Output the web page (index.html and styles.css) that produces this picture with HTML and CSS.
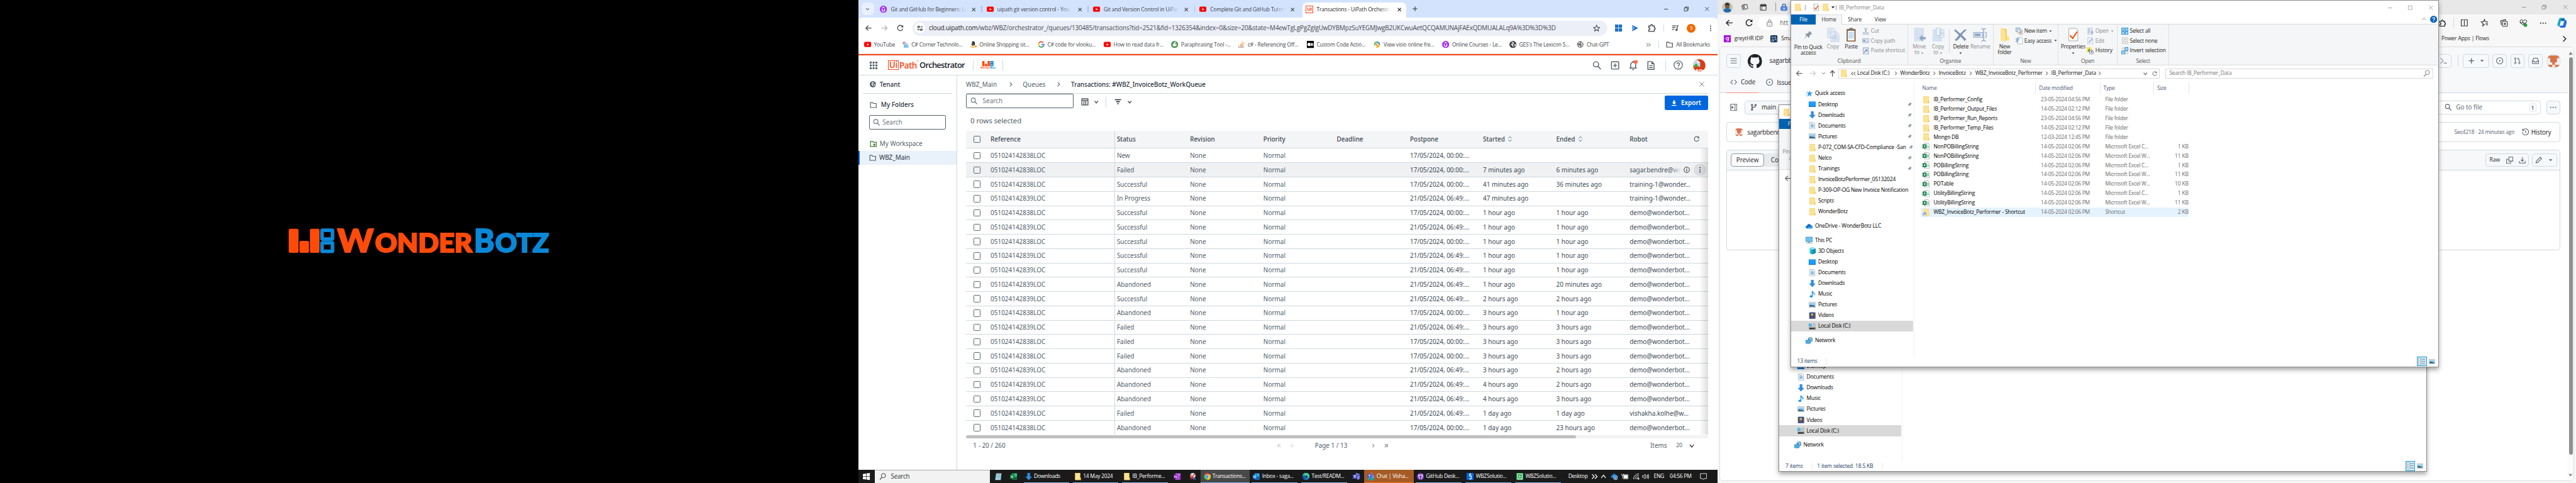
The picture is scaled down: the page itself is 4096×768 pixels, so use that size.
FILE: index.html
```html
<!DOCTYPE html>
<html lang="en">
<head>
<meta charset="utf-8">
<title>Desktop</title>
<link rel="stylesheet" href="styles.css">
</head>
<body>
<svg class="sprite" aria-hidden="true">
<symbol id="x" viewBox="0 0 16 16"><path d="M3 3l10 10M13 3L3 13" fill="none" stroke="currentColor" stroke-width="2"/></symbol>
<symbol id="xthin" viewBox="0 0 16 16"><path d="M2 2l12 12M14 2L2 14" fill="none" stroke="currentColor" stroke-width="1.3"/></symbol>
<symbol id="min" viewBox="0 0 16 16"><path d="M2 8.5h12" stroke="currentColor" stroke-width="1.4"/></symbol>
<symbol id="max" viewBox="0 0 16 16"><path d="M2.500 2.500h11v11h-11z" fill="none" stroke="currentColor" stroke-width="1.3"/></symbol>
<symbol id="restore" viewBox="0 0 16 16"><path d="M2 5h9v9H2zM5 5V2h9v9h-3" fill="none" stroke="currentColor" stroke-width="1.4"/></symbol>
<symbol id="plus" viewBox="0 0 16 16"><path d="M8 2v12M2 8h12" stroke="currentColor" stroke-width="1.8"/></symbol>
<symbol id="down" viewBox="0 0 16 16"><path d="M3 5l5 6 5-6" fill="none" stroke="currentColor" stroke-width="2.200"/></symbol>
<symbol id="up" viewBox="0 0 16 16"><path d="M3 11l5-6 5 6" fill="none" stroke="currentColor" stroke-width="1.700"/></symbol>
<symbol id="right" viewBox="0 0 16 16"><path d="M5 2l6 6-6 6" fill="none" stroke="currentColor" stroke-width="2"/></symbol>
<symbol id="left" viewBox="0 0 16 16"><path d="M11 2L5 8l6 6" fill="none" stroke="currentColor" stroke-width="2"/></symbol>
<symbol id="first" viewBox="0 0 16 16"><path d="M12 2L6 8l6 6M3 2v12" fill="none" stroke="currentColor" stroke-width="2"/></symbol>
<symbol id="last" viewBox="0 0 16 16"><path d="M4 2l6 6-6 6M13 2v12" fill="none" stroke="currentColor" stroke-width="2"/></symbol>
<symbol id="dright" viewBox="0 0 16 16"><path d="M2 3l5 5-5 5M8.500 3l5 5-5 5" fill="none" stroke="currentColor" stroke-width="1.800"/></symbol>
<symbol id="dleft" viewBox="0 0 16 16"><path d="M7 4L3 8l4 4M13 4L9 8l4 4" fill="none" stroke="currentColor" stroke-width="1.500"/></symbol>
<symbol id="caret" viewBox="0 0 16 16"><path d="M2 5h12l-6 7z" fill="currentColor"/></symbol>
<symbol id="caretup" viewBox="0 0 16 16"><path d="M1 14h14L8 2z" fill="currentColor"/></symbol>
<symbol id="back" viewBox="0 0 16 16"><path d="M15 8H3M8 2.500L2.500 8 8 13.500" fill="none" stroke="currentColor" stroke-width="1.800"/></symbol>
<symbol id="fwd" viewBox="0 0 16 16"><path d="M1 8h12M8 2.500L13.500 8 8 13.500" fill="none" stroke="currentColor" stroke-width="1.800"/></symbol>
<symbol id="upa" viewBox="0 0 16 16"><path d="M8 15V3M3 7.500L8 2l5 5.500" fill="none" stroke="currentColor" stroke-width="2"/></symbol>
<symbol id="reload" viewBox="0 0 16 16"><path d="M13.500 9.500A6 6 0 1 1 12.200 3.700L13.500 5.200" fill="none" stroke="currentColor" stroke-width="1.800"/><path d="M14.300 1v5.300H9z" fill="currentColor"/></symbol>
<symbol id="tune" viewBox="0 0 16 16"><path d="M1 4.500h5M9 11.500h6M9 4.500h6M1 11.500h6" stroke="currentColor" stroke-width="1.800"/><g fill="#fff" stroke="currentColor" stroke-width="1.800"><circle cx="4.500" cy="4.500" r="2.200"/><circle cx="11" cy="11.500" r="2.200"/></g></symbol>
<symbol id="star" viewBox="0 0 16 16"><path d="M8 1.500l1.900 4.600 5 .4-3.800 3.200 1.200 4.800L8 11.900l-4.300 2.600 1.200-4.800L1.100 6.500l5-.4z" fill="none" stroke="currentColor" stroke-width="1.500"/></symbol>
<symbol id="win4" viewBox="0 0 16 16"><path d="M0 0h7.500v7.500H0zM8.500 0H16v7.500H8.500zM0 8.500h7.500V16H0zM8.500 8.500H16V16H8.500z" fill="currentColor"/></symbol>
<symbol id="tri" viewBox="0 0 16 16"><path d="M2 1l13 7-13 7z" fill="#1b66c9"/><path d="M2 1l6 7-6 7z" fill="#6aa7e8"/></symbol>
<symbol id="puzzle" viewBox="0 0 16 16"><path d="M2 4h4V3a1.500 1.500 0 0 1 3.500 0v1H13v3.500h.5a1.500 1.500 0 0 1 0 3.500H13v4H2v-3.500h.5a1.700 1.700 0 0 0 0-4H2z" fill="none" stroke="currentColor" stroke-width="1.700"/></symbol>
<symbol id="music" viewBox="0 0 16 16"><path d="M1 3h9M1 7h8M1 11h5M12.500 12V2.500H16" fill="none" stroke="currentColor" stroke-width="1.800"/><circle cx="10.800" cy="12.200" r="2.300" fill="currentColor"/></symbol>
<symbol id="dots" viewBox="0 0 16 16"><g fill="currentColor"><circle cx="8" cy="2.500" r="1.700"/><circle cx="8" cy="8" r="1.700"/><circle cx="8" cy="13.500" r="1.700"/></g></symbol>
<symbol id="hdots" viewBox="0 0 16 16"><g fill="currentColor"><circle cx="2.500" cy="8" r="1.400"/><circle cx="8" cy="8" r="1.400"/><circle cx="13.500" cy="8" r="1.400"/></g></symbol>
<symbol id="yt" viewBox="0 0 16 16"><rect y="2.200" width="16" height="11.600" rx="3" fill="#f00"/><path d="M6.500 5.500v5L11 8z" fill="#fff"/></symbol>
<symbol id="udemy" viewBox="0 0 16 16"><circle cx="8" cy="8" r="8" fill="#a435f0"/><path d="M5.300 7v3a2.700 2.700 0 0 0 5.400 0V7M5.500 5L8 3.500 10.500 5" fill="none" stroke="#fff" stroke-width="1.700"/></symbol>
<symbol id="ccorner" viewBox="0 0 16 16"><circle cx="5" cy="5" r="3.500" fill="#e58f8a"/><path d="M4 15l1-8 9 1 1 7z" fill="#79bde6"/><path d="M8 2l6 6-4 4-6-6z" fill="#a9cdea"/></symbol>
<symbol id="amazon" viewBox="0 0 16 16"><path d="M5 3.500Q8 1 10 3.500V10M10 5.500Q5 5 5 7.800T10 8.500" fill="none" stroke="#111" stroke-width="2.200"/><path d="M1 12q7 4.500 13 0M14.500 14.500V11h-3" fill="none" stroke="#f90" stroke-width="1.600"/></symbol>
<symbol id="google" viewBox="0 0 16 16"><g fill="none" stroke-width="2.600"><path d="M12.500 3.800A6 6 0 0 0 3 4.800" stroke="#ea4335"/><path d="M3 4.800a6 6 0 0 0 0 6.400" stroke="#fbbc05"/><path d="M3 11.200a6 6 0 0 0 9 1.200" stroke="#34a853"/><path d="M12 12.400A6 6 0 0 0 14 8H8" stroke="#4285f4"/></g></symbol>
<symbol id="quill" viewBox="0 0 16 16"><circle cx="8" cy="8" r="8" fill="#499557"/><path d="M4 6h8v6H4z" fill="#fff"/><path d="M5.500 8h1.500v1.500H5.500zM9 8h1.500v1.500H9z" fill="#499557"/><path d="M8 6V3h3" stroke="#fff" stroke-width="1.500" fill="none"/></symbol>
<symbol id="so" viewBox="0 0 16 16"><path d="M2 10v5h11v-5" fill="none" stroke="#9aa0a6" stroke-width="1.300"/><path d="M4.500 12.700h6.500M4.600 10l6.500 1M5.500 7l6 2.800M7.500 4l5 4.300M10.500 1.500l3.500 5.500" stroke="#f48024" stroke-width="1.300"/></symbol>
<symbol id="medium" viewBox="0 0 16 16"><path d="M0 0h16v16H0z"/><circle cx="5" cy="8" r="3.700" fill="#fff"/><ellipse cx="11" cy="8" rx="1.800" ry="3.500" fill="#fff"/><path d="M14 5v6" stroke="#fff"/></symbol>
<symbol id="visio" viewBox="0 0 16 16"><g fill="none" stroke-width="3.200"><path d="M3 10A5.500 5.500 0 0 1 8 2.500" stroke="#5bb947"/><path d="M8 2.500a5.500 5.500 0 0 1 5 6" stroke="#2d9be0"/><path d="M13 8.500a5.500 5.500 0 0 1-7 5" stroke="#f5b51b"/></g><path d="M9 5l-3 4 4 2" fill="none" stroke="#ef7d2a" stroke-width="2"/></symbol>
<symbol id="globe" viewBox="0 0 16 16"><circle cx="8" cy="8" r="8" fill="currentColor"/><path d="M5 3l4 1-1 3-3 1 3 2v3M11 8l3 1-2 3" fill="none" stroke="#fff" stroke-width="1.800"/></symbol>
<symbol id="gpt" viewBox="0 0 16 16"><g fill="none" stroke="#444" stroke-width="1.300"><circle cx="8" cy="8" r="6.500"/><path d="M8 2v7l5 3M3 5l6 3.500v6M14 6L7 9.500 2 7M5 13V7l6-4"/></g></symbol>
<symbol id="folder" viewBox="0 0 16 16"><path d="M1.500 3h5l1.500 2h6.500v9h-13z" fill="none" stroke="currentColor" stroke-width="1.600"/></symbol>
<symbol id="folderstar" viewBox="0 0 16 16"><path d="M1.500 2.500h5l1.500 2h6.500v9.500h-13z" fill="none" stroke="#3c7a28" stroke-width="1.700"/><path d="M10 6.500l1 2 2 .3-1.500 1.500.4 2.200-1.900-1-1.900 1 .4-2.200L7 8.800l2-.3z" fill="#3c7a28"/></symbol>
<symbol id="waffle" viewBox="0 0 16 16"><path d="M0 0h4v4H0zM6 0h4v4H6zM12 0h4v4h-4zM0 6h4v4H0zM6 6h4v4H6zM12 6h4v4h-4zM0 12h4v4H0zM6 12h4v4H6zM12 12h4v4h-4z" fill="#526069"/></symbol>
<symbol id="search" viewBox="0 0 16 16"><circle cx="6.500" cy="6" r="4.700" fill="none" stroke="currentColor" stroke-width="1.600"/><path d="M10 9.500l5 5.500" stroke="currentColor" stroke-width="1.800"/></symbol>
<symbol id="wsearch" viewBox="0 0 16 16"><circle cx="9.500" cy="6" r="4.700" fill="none" stroke="currentColor" stroke-width="1.300"/><path d="M6.200 9.700L1.500 15" stroke="currentColor" stroke-width="1.500"/></symbol>
<symbol id="addbox" viewBox="0 0 16 16"><rect x="1.500" y="1.500" width="13" height="13" rx="1" fill="none" stroke="currentColor" stroke-width="1.600"/><path d="M8 4.500v7M4.500 8h7" stroke="currentColor" stroke-width="1.600"/></symbol>
<symbol id="bell" viewBox="0 0 16 16"><path d="M2 12.500h12M4 12.500V7a4 4 0 0 1 8 0v5.500M8 1v2M6.500 15h3" fill="none" stroke="currentColor" stroke-width="1.500"/><circle cx="12" cy="2" r="3.500" fill="#ff6e50"/></symbol>
<symbol id="doc" viewBox="0 0 16 16"><path d="M2.500 1h7l4 4v10h-11zM5 8h6M5 11.500h6" fill="none" stroke="currentColor" stroke-width="1.600"/><path d="M9 1l4.500 4.500H9z" fill="currentColor"/></symbol>
<symbol id="help" viewBox="0 0 16 16"><circle cx="8" cy="8" r="7.200" fill="none" stroke="currentColor" stroke-width="1.300"/><path d="M5.800 6.300a2.200 2.200 0 1 1 3.500 1.800Q8 9 8 10.200M8 11.500v1.400" fill="none" stroke="currentColor" stroke-width="1.500"/></symbol>
<symbol id="av" viewBox="0 0 28 28"><clipPath id="avc"><circle cx="14" cy="14" r="14"/></clipPath><g clip-path="url(#avc)"><path d="M0 0h28v28H0z" fill="#dc3c14"/><path d="M0 2h10l6 6v9H0z" fill="#c8dcf2" stroke="#999"/><path d="M0 17l7-8 6 8z" fill="#4da534"/><path d="M10 2v6h6z" fill="#fff"/><path d="M12 24H8v2.500h4V29M15 29v-5h4q2 2 0 3.500M22 24v5" fill="none" stroke="#fff" stroke-width="2"/></g></symbol>
<symbol id="cols" viewBox="0 0 16 16"><path d="M1.500 1.500h13v13h-13zM1.500 5h13M6 5v9.500M10 5v9.500" fill="none" stroke="currentColor" stroke-width="1.500"/></symbol>
<symbol id="filter" viewBox="0 0 16 16"><path d="M1 3.500h14M4 8h8M6.500 12.500h3" stroke="currentColor" stroke-width="2.400"/></symbol>
<symbol id="dl" viewBox="0 0 16 16"><path d="M6 1h4v5h3.500L8 11.500 2.500 6H6zM2 13h12v2H2z" fill="currentColor"/></symbol>
<symbol id="sort" viewBox="0 0 16 16"><path d="M4 6l4-4 4 4M4 10l4 4 4-4" fill="none" stroke="currentColor" stroke-width="1.600"/></symbol>
<symbol id="info" viewBox="0 0 16 16"><circle cx="8" cy="8" r="7" fill="none" stroke="currentColor" stroke-width="1.500"/><path d="M8 7v5M8 4v1.700" stroke="currentColor" stroke-width="1.700"/></symbol>
<symbol id="winlogo" viewBox="0 0 16 16"><path d="M0 2.300l7-1v6.200H0zM8 1.100L16 0v7.500H8zM0 8.500h7v6.200l-7-1zM8 8.500h8V16l-8-1.100z" fill="#fff"/></symbol>
<symbol id="note" viewBox="0 0 16 16"><path d="M2.500 2h12L13 16H.5z" fill="#a9d6e6"/><path d="M3 5h10M3 8h10M2 11h10" stroke="#5aa0b8"/><path d="M3 1.500h12" stroke="#ddd" stroke-width="2" stroke-dasharray="1.500 1"/></symbol>
<symbol id="excel" viewBox="0 0 16 16"><path d="M4 1h12v14H4z" fill="#21a366"/><path d="M10 1h6v5h-6z" fill="#33c481"/><path d="M4 10h12v5H4z" fill="#185c37"/><path d="M0 4h9v9H0z" fill="#107c41"/><path d="M2.500 6l4 5M6.500 6l-4 5" stroke="#fff" stroke-width="1.400"/></symbol>
<symbol id="arrowdl" viewBox="0 0 16 16"><path d="M5 0h6v8h4.500L8 16 .5 8H5z" fill="#2f8ede"/></symbol>
<symbol id="fold" viewBox="0 0 16 16"><path d="M2 0h11.500v11H15v5H2z" fill="#ffe394"/><path d="M2.300.3h11v15.400h-11zM13.300 11h1.400v4.700h-1.400z" fill="none" stroke="#eec14b" stroke-width=".700"/></symbol>
<symbol id="newfold" viewBox="0 0 32 32"><path d="M7 1l14 2v25l-4 3V7z" fill="#f3cc60"/><path d="M7 1l11 5v25L7 29z" fill="#ffe394"/><path d="M21 20h5v9h-8z" fill="#ffdb7a"/></symbol>
<symbol id="onenote" viewBox="0 0 16 16"><path d="M4 1h12v14H4z" fill="#ca64ea"/><path d="M12 6h4v9h-4z" fill="#9332bf"/><path d="M0 4h9v9H0z" fill="#7719aa"/><path d="M2.700 11V6l4 5V6" fill="none" stroke="#fff" stroke-width="1.300"/></symbol>
<symbol id="snip" viewBox="0 0 16 16"><circle cx="8" cy="6" r="6" fill="#ddd"/><path d="M2 4l8 8M12 2l-6 9" stroke="#d22" stroke-width="1.800"/><circle cx="11.500" cy="13" r="2" fill="none" stroke="#2b7cd3" stroke-width="1.500"/><circle cx="4.500" cy="12" r="2" fill="none" stroke="#d22" stroke-width="1.500"/></symbol>
<symbol id="chrome" viewBox="0 0 16 16"><circle cx="8" cy="8" r="8" fill="#34a853"/><path d="M1 4a8 8 0 0 1 14 0H8z" fill="#ea4335"/><path d="M15 4a8 8 0 0 1-7.500 12L11 8 8 4z" fill="#fbbc05"/><circle cx="8" cy="8" r="4" fill="#fff"/><circle cx="8" cy="8" r="3.100" fill="#4285f4"/></symbol>
<symbol id="outlook" viewBox="0 0 16 16"><path d="M4 1h11v14H4z" fill="#28a8ea"/><path d="M4 8l12 0v7H4z" fill="#0f5fb0"/><path d="M0 4h9v9H0z" fill="#0f78d4"/><circle cx="4.500" cy="8.500" r="2.300" fill="none" stroke="#fff" stroke-width="1.400"/></symbol>
<symbol id="edge" viewBox="0 0 16 16"><circle cx="8" cy="8" r="8" fill="#1b74c4"/><path d="M0 7a8 8 0 0 1 16 1q-1 4-6 3 2-5-3-5-5 0-7 1z" fill="#3fc8a0"/><path d="M0 8q1-4 6-3-4 4 1 9-6 1-7-6z" fill="#0c59a4"/><circle cx="9.200" cy="8.500" r="2.200" fill="#191919"/></symbol>
<symbol id="teams" viewBox="0 0 16 16"><path d="M9 6h7v6q-2 4-6 3z" fill="#7b83eb"/><circle cx="13.500" cy="3.500" r="2" fill="#7b83eb"/><circle cx="9" cy="2.700" r="2.700" fill="#7b83eb"/><path d="M0 4h9.500v9H0z" fill="#4b53bc"/><path d="M2.300 6.300h5M4.800 6v5" stroke="#fff" stroke-width="1.400"/></symbol>
<symbol id="teamsnew" viewBox="0 0 16 16"><path d="M9 5h7v5H9z" fill="#7b83eb"/><circle cx="9" cy="2.500" r="2.500" fill="#7b83eb"/><path d="M0 2.500h9.500V11H0z" fill="#4b53bc"/><path d="M2.300 4.800h5M4.800 4.500V9" stroke="#fff" stroke-width="1.300"/><rect x="2" y="10.500" width="14" height="5.500" rx="1.500" fill="#27d3e0"/><path d="M4 15v-3l2 3v-3M9.500 12H8v2.700h1.500M11 12l1 3 1-2 1 2 .8-3" fill="none" stroke="#103a50" stroke-width=".900"/></symbol>
<symbol id="ghdesk" viewBox="0 0 16 16"><circle cx="8" cy="8" r="8" fill="#7a3fb4"/><path d="M5.500 13.500v-3Q3.500 9 4 6.500V4l2 .8h4L12 4v2.500q.5 2.500-1.500 4v3" fill="none" stroke="#fff" stroke-width="1.500"/></symbol>
<symbol id="studio" viewBox="0 0 16 16"><path d="M0 0h16v16H0z" fill="#0067df"/><path d="M10.500 3H6.500v4h4v6H6M8.500 1v3M8.500 12v3" fill="none" stroke="#fff" stroke-width="1.700"/></symbol>
<symbol id="assist" viewBox="0 0 16 16"><path d="M0 0h16v16H0z" fill="#21a046"/><path d="M3 2.500h10v11H3z" fill="none" stroke="#fff" stroke-width="1.500"/><path d="M6.500 5.500v5L11 8z" fill="#fff"/></symbol>
<symbol id="cloud" viewBox="0 0 16 16"><path d="M3 11Q0 10 1 7q1-2 3-2 1-4 5-3 3 1 3 3 4 0 4 3t-3 3z" fill="#1f86d6"/><circle cx="11" cy="11" r="4.500" fill="#1560b0" stroke="#fff"/><path d="M8.500 11h5M11 8.500v5" stroke="#fff"/></symbol>
<symbol id="batt" viewBox="0 0 16 16"><path d="M5 5h9v7H5z" fill="#fff"/><path d="M4 4h11.200v9H4M1 2v3h4V2M3 5v7" fill="none" stroke="#fff" stroke-width="1.200"/></symbol>
<symbol id="wifi" viewBox="0 0 16 16"><g fill="none" stroke="#fff" stroke-width="1.200"><path d="M2 14A12 12 0 0 1 14 2M5.500 14A8.500 8.500 0 0 1 14 5.500M9 14a5 5 0 0 1 5-5"/></g><circle cx="13" cy="13" r="1.700" fill="#fff"/></symbol>
<symbol id="spk" viewBox="0 0 16 16"><g fill="none" stroke="#fff" stroke-width="1.200"><path d="M1 6h2.500L7 3v10l-3.500-3H1zM9.500 5.500q2 2.500 0 5M11.500 4q3 4 0 8M13.500 2.500q4 5.500 0 11"/></g></symbol>
<symbol id="notif" viewBox="0 0 16 16"><path d="M1 1.500h14v11H10L8 15l-2-2.500H1z" fill="none" stroke="#fff" stroke-width="1.200"/></symbol>
<symbol id="photo" viewBox="0 0 24 24"><circle cx="12" cy="12" r="12" fill="#bcc8b8"/><circle cx="12" cy="9" r="5.500" fill="#7b5541"/><path d="M6.500 7q1-5 5.500-5t5.500 5l-3-1z" fill="#222"/><path d="M3 20q2-6 9-6t9 6q-4 4-9 4t-9-4z" fill="#2469a8"/></symbol>
<symbol id="copies" viewBox="0 0 16 16"><path d="M6 4l6-1.500 2 8L8 12.500zM4 3.500L2 5l1.500 8M8 2l-4 2 2 10" fill="none" stroke="currentColor" stroke-width="1.100"/></symbol>
<symbol id="vtabs" viewBox="0 0 16 16"><rect x="1.500" y="1.500" width="13" height="13" rx="2" fill="none" stroke="currentColor" stroke-width="1.500"/><path d="M2 2h12v4H2z" fill="currentColor"/><path d="M5 5v9" stroke="currentColor"/></symbol>
<symbol id="lock" viewBox="0 0 16 16"><rect x="2.500" y="6" width="11" height="9" rx="1.500" fill="none" stroke="currentColor" stroke-width="1.300"/><path d="M5 6V4a3 3 0 0 1 6 0v2" fill="none" stroke="currentColor" stroke-width="1.300"/><circle cx="8" cy="10.500" r="1" fill="currentColor"/></symbol>
<symbol id="block" viewBox="0 0 16 16"><rect x="1" y="6" width="14" height="9.500" rx="3" fill="#5b8def" stroke="#2c4f9c"/><path d="M4.500 6V4a3.500 3.500 0 0 1 7 0v2" fill="none" stroke="#2c4f9c" stroke-width="1.700"/><path d="M8 9v4" stroke="#fff" stroke-width="2"/></symbol>
<symbol id="greyt" viewBox="0 0 16 16"><path d="M0 0h16v16H0z" fill="#a70fe0"/><circle cx="8" cy="7" r="2.500" fill="none" stroke="#fff" stroke-width="1.600"/><path d="M10.500 4.500V11q-.5 2.500-4 1.500M2 8h1.500M13 5h1" fill="none" stroke="#fff" stroke-width="1.500"/></symbol>
<symbol id="smart" viewBox="0 0 16 16"><rect width="16" height="16" rx="3" fill="#0e3058"/><g fill="none" stroke="#fff"><circle cx="5" cy="5" r="1.800"/><circle cx="11" cy="5" r="1.800"/><path d="M3 10h5v3H3zM9.500 9H13v4"/></g></symbol>
<symbol id="split" viewBox="0 0 16 16"><path d="M6.500 2H2v12h4.500M9.500 2H14v12H9.500M8 1v14" fill="none" stroke="currentColor" stroke-width="1.300"/></symbol>
<symbol id="favs" viewBox="0 0 16 16"><path d="M9 10.500L4.500 14l1-4.500L1.500 6l5-.5L8 1l1.500 4.500M10 6h5M10.500 9h4.500M11 12h4" fill="none" stroke="currentColor" stroke-width="1.300"/></symbol>
<symbol id="collect" viewBox="0 0 16 16"><rect x="5" y="5" width="10" height="10" rx="2" fill="none" stroke="currentColor" stroke-width="1.300"/><path d="M10 7.500v5M7.500 10h5M3 12L1.500 4 11 1.500l.5 2" fill="none" stroke="currentColor" stroke-width="1.300"/></symbol>
<symbol id="heart" viewBox="0 0 16 16"><path d="M8 13L2 7.500Q0 3 4 2q2.500 0 4 2 1.500-2 4-2 4 1 2 5.500M1 8h4l1.500-3 2 6L10 8h3" fill="none" stroke="currentColor" stroke-width="1.200"/><circle cx="12" cy="12.500" r="3.500" fill="#0f8a2f"/><path d="M10.500 12.500l1 1 2-2" stroke="#fff" fill="none"/></symbol>
<symbol id="copilot" viewBox="0 0 24 24"><path d="M8 2h8l2 6H9L6 20q-5-1-4-6L5 5q1-3 3-3z" fill="#1aa5c8"/><path d="M16 22H8l-2-4h7l4-12q5 1 4 6l-2 7q-1 3-3 3z" fill="#256ddc"/><path d="M10 4h6l2 4H9z" fill="#1661b8"/></symbol>
<symbol id="burger" viewBox="0 0 16 16"><path d="M1 3h14M1 8h14M1 13h14" stroke="currentColor" stroke-width="1.300"/></symbol>
<symbol id="gh" viewBox="0 0 16 16"><path fill="#1f2328" d="M8 0C3.580 0 0 3.580 0 8c0 3.540 2.290 6.530 5.470 7.590.4.070.55-.17.55-.38 0-.19-.01-.82-.01-1.490-2.010.37-2.530-.49-2.690-.94-.09-.23-.48-.94-.82-1.130-.28-.15-.68-.52-.01-.53.63-.01 1.080.58 1.230.82.72 1.210 1.870.87 2.330.66.07-.52.28-.87.51-1.070-1.780-.2-3.640-.89-3.640-3.950 0-.87.31-1.590.82-2.150-.08-.2-.36-1.020.08-2.120 0 0 .67-.21 2.200.82.64-.18 1.320-.27 2-.27s1.360.09 2 .27c1.530-1.040 2.200-.82 2.200-.82.44 1.100.16 1.920.08 2.120.51.56.82 1.270.82 2.150 0 3.070-1.870 3.750-3.650 3.950.29.25.54.73.54 1.480 0 1.070-.01 1.930-.01 2.200 0 .21.15.46.55.38A8 8 0 0 0 16 8c0-4.420-3.580-8-8-8z"/></symbol>
<symbol id="code" viewBox="0 0 16 16"><path d="M6 3L1.500 8 6 13M10 3l4.500 5L10 13" fill="none" stroke="currentColor" stroke-width="1.500"/></symbol>
<symbol id="issue" viewBox="0 0 16 16"><circle cx="8" cy="8" r="7" fill="none" stroke="currentColor" stroke-width="1.500"/><circle cx="8" cy="8" r="1.600" fill="currentColor"/></symbol>
<symbol id="side" viewBox="0 0 16 16"><path d="M1 1h14v14H1zM11 1v14M4 5.500L7 8l-3 2.500z" fill="none" stroke="currentColor" stroke-width="1.500"/></symbol>
<symbol id="branch" viewBox="0 0 16 16"><g fill="none" stroke="currentColor" stroke-width="1.400"><circle cx="4" cy="3" r="1.700"/><circle cx="12" cy="3" r="1.700"/><circle cx="4" cy="13" r="1.700"/><path d="M4 4.700v6.600M12 4.700Q12 8 8 8H4"/></g></symbol>
<symbol id="pr" viewBox="0 0 16 16"><g fill="none" stroke="currentColor" stroke-width="1.400"><circle cx="3.500" cy="3" r="1.700"/><circle cx="12.500" cy="13" r="1.700"/><circle cx="3.500" cy="13" r="1.700"/><path d="M3.500 4.700v6.600M12.500 11V6q0-3-4-3M10.500 1l-2 2 2 2"/></g></symbol>
<symbol id="inbox" viewBox="0 0 16 16"><path d="M4 2h8l3 7v5H1V9zM1 9h4l1 2h4l1-2h4" fill="none" stroke="currentColor" stroke-width="1.500"/></symbol>
<symbol id="term" viewBox="0 0 16 16"><path d="M1 2l6 6-6 6M8 13h7" fill="none" stroke="currentColor" stroke-width="1.400"/></symbol>
<symbol id="ident" viewBox="0 0 32 32"><clipPath id="idc"><circle cx="16" cy="16" r="16"/></clipPath><g clip-path="url(#idc)"><path d="M0 0h32v32H0z" fill="#f0f0f0"/><path d="M3 3h6v6H3zM23 3h6v6h-6zM8.500 3h15v15.500H19V24h-6v-5.500H8.500zM3 24h10v5H3zM19 24h10v5H19z" fill="#d9734a"/></g><circle cx="16" cy="16" r="15.500" fill="none" stroke="#dcdfe3"/></symbol>
<symbol id="hist" viewBox="0 0 16 16"><path d="M2 4.500A7 7 0 1 1 1 8M1.500 1v4h4M8 4.500V8l2.500 2" fill="none" stroke="currentColor" stroke-width="1.500"/></symbol>
<symbol id="copy" viewBox="0 0 16 16"><path d="M6 1h9v9H6zM5 6H1v9h9v-4" fill="none" stroke="currentColor" stroke-width="1.500"/></symbol>
<symbol id="dlbox" viewBox="0 0 16 16"><path d="M8 1v9M4.500 7L8 10.500 11.500 7M1.500 10v4.500h13V10" fill="none" stroke="currentColor" stroke-width="1.500"/></symbol>
<symbol id="pencil" viewBox="0 0 16 16"><path d="M2 14l1-4 8.500-8.500 3 3L6 13z" fill="none" stroke="currentColor" stroke-width="1.500"/></symbol>
<symbol id="check" viewBox="0 0 16 16"><path d="M3 .5h8L13.500 3v12.500H3z" fill="#fff" stroke="#8a8a8a"/><path d="M4.500 9l3 3 5-8" fill="none" stroke="#f0530f" stroke-width="2"/></symbol>
<symbol id="qa" viewBox="0 0 16 16"><path d="M9 1l1.500 4.500H16L11.500 9l2 6L9 11.500 4 15l2-6-3-3.500h4.500z" fill="#2f9be8"/><path d="M1 4h4M0 9h4M1 13h3" stroke="#5bb4f0"/></symbol>
<symbol id="desk" viewBox="0 0 16 16"><path d="M0 2h16v12H0z" fill="#0d6fc4"/><path d="M.7 2.700h14.600v9.600H.7z" fill="#1a9fff"/></symbol>
<symbol id="docs" viewBox="0 0 16 16"><path d="M2.500.5h8.500L13.500 3v12.500h-11z" fill="#fff" stroke="#8b98a3"/><path d="M4.500 4h3M4.500 7h7M4.500 9h7M4.500 11.500h7M9 3.500v3" stroke="#3b8fd0" stroke-width="1.300"/></symbol>
<symbol id="pics" viewBox="0 0 16 16"><path d="M.5 2.500h15v11H.5z" fill="#fff" stroke="#8b98a3"/><path d="M2 4h12v8H2z" fill="#8ec9f5"/><path d="M2 8l5 1 7 1v2H2z" fill="#23505f"/></symbol>
<symbol id="vids" viewBox="0 0 16 16"><path d="M1 1h14v14H1z" fill="#2b2b2b"/><path d="M4 1h8v14H4z" fill="#2c62b8"/><path d="M5 4h5v4H5z" fill="#e8b53a"/><path d="M7 9h4v4H7z" fill="#a43b2a"/><path d="M2.300 1v14M13.700 1v14" stroke="#fff" stroke-dasharray="1.200 1.200"/></symbol>
<symbol id="onedrive" viewBox="0 0 16 16"><path d="M3 13Q0 12.500 0 10t3-3q1-4 5-4 3.500 0 4.500 3.500Q16 7 16 10t-3 3z" fill="#0f6cd0"/><path d="M4 13q0-4 5-4 5-2 7 1 0 3-3 3z" fill="#32a3ee"/></symbol>
<symbol id="pc" viewBox="0 0 16 16"><path d="M.5 1.500h15v10H.5z" fill="#6fc4f5" stroke="#2b7cb0"/><path d="M6 12h4v2H6zM1 14.500h14v1H1z" fill="#8496a5"/></symbol>
<symbol id="cube" viewBox="0 0 16 16"><path d="M8 0l8 3v10l-8 3-8-3V3z" fill="#22b5cf"/><path d="M8 5l8-2v10l-8 3z" fill="#0e93b0"/><path d="M0 3l8-3 8 3-8 2.500z" fill="#8ae4f0"/><path d="M0 3l3 1v10l-3-1z" fill="#c5f2f7"/></symbol>
<symbol id="note8" viewBox="0 0 16 16"><ellipse cx="5.500" cy="13" rx="3.300" ry="2.600" fill="#1a93ea"/><path d="M7.800 13V1q1 3 3.500 4.500T11 10" fill="none" stroke="#1a93ea" stroke-width="2"/></symbol>
<symbol id="disk" viewBox="0 0 16 16"><path d="M0 2h3v3H0zM3.700 2h3v3h-3zM0 5.700h3v3H0zM3.700 5.700h3v3h-3z" fill="#1aa7e8"/><path d="M1 11h14v4H1z" fill="#333"/><path d="M0 10h16v1.500H0z" fill="#aaa"/><path d="M12 13h2" stroke="#5f5"/><path d="M9 4.500h6v4H9zM10.500 4V1.500h3V3" fill="none" stroke="#999"/></symbol>
<symbol id="net" viewBox="0 0 16 16"><circle cx="10.500" cy="5.500" r="5.500" fill="#5d9cb9"/><path d="M8 1l5 3-3 3 4 3" stroke="#bfe0ee" fill="none" stroke-width="1.500"/><path d="M0 7h11v7H0z" fill="#49b0ee" stroke="#2b7cb0"/><path d="M3.500 15.500h5" stroke="#8496a5"/></symbol>
<symbol id="xls" viewBox="0 0 16 16"><path d="M4.500.5h8L15.500 4v11.500h-11z" fill="#fff" stroke="#8a8a8a"/><path d="M10 6h4M10 8.500h4M10 11h4" stroke="#107c41"/><path d="M0 3.500h9v9H0z" fill="#107c41"/><path d="M2.500 5.500l4 5M6.500 5.500l-4 5" stroke="#fff" stroke-width="1.400"/></symbol>
<symbol id="csv" viewBox="0 0 16 16"><path d="M4.500.5h8L15.500 4v11.500h-11z" fill="#fff" stroke="#8a8a8a"/><path d="M10.500 7q1-1 2.500 0v4q-3 0-2.500-1.500T13 9" fill="none" stroke="#33c481"/><path d="M0 3.500h9v9H0z" fill="#107c41"/><path d="M2.500 5.500l4 5M6.500 5.500l-4 5" stroke="#fff" stroke-width="1.400"/></symbol>
<symbol id="short" viewBox="0 0 16 16"><path d="M3 0h10.500v11H15v5H3z" fill="#ffe394" stroke="#eec14b" stroke-width=".600"/><path d="M.5 8.500h7v7h-7z" fill="#fff" stroke="#999"/><path d="M2 14q0-3 3.500-3.500M3.500 9.800H6v2.700" fill="none" stroke="#1663c0" stroke-width="1.300"/></symbol>
<symbol id="pin" viewBox="0 0 16 16"><path d="M10 1l5 5-2 .5-2.500 3L10 13 6.500 9.500 1 15l4.500-6.500L3 6l3.500-.5 3-2.500z" fill="#8c98a3"/></symbol>
<symbol id="rcopy" viewBox="0 0 32 32"><path d="M4.500 1.500h13l4 4v17h-17zM11.500 9.500h13l5 5v17h-18z" fill="#e8f0fa" stroke="#a9bcd6"/><path d="M14 16h11M14 19h13M14 22h13M14 25h13M14 28h13M7 6h8M7 9h3M7 12h3M7 15h3" stroke="#a9bcd6"/></symbol>
<symbol id="rpaste" viewBox="0 0 32 32"><path d="M6 3h20v28H6z" fill="#8a5a33"/><path d="M8.500 7h15v22h-15z" fill="#fff"/><path d="M11 3q0-2 5-2.500Q21 1 21 3l1 4H10z" fill="#777"/><path d="M10 11h12M10 14h12M10 17h12M10 20h12M10 23h12" stroke="#5aa0e0"/></symbol>
<symbol id="rmove" viewBox="0 0 32 32"><path d="M6 1h20v29H6z" fill="#d5e2f2" stroke="#b6c8de" stroke-width=".500"/><path d="M16 23l8-7v5h7v5h-7v5z" fill="#8fa5c4"/></symbol>
<symbol id="rcopyto" viewBox="0 0 32 32"><path d="M4 3h21v28H4z" fill="#d5e2f2"/><path d="M12.500.5h8l2 3v14h-10zM19.500 4.500h8l2 3v14h-10z" fill="#eef4fb" stroke="#a9bcd6"/><path d="M21 10h7M21 13h7M21 16h7" stroke="#a9bcd6"/></symbol>
<symbol id="rdel" viewBox="0 0 32 32"><path d="M4 3q8 8 12 10Q20 7 27 3l2 3q-8 6-10 10 5 5 10 10l-4 4q-6-8-9-10-4 6-9 10l-4-3q7-6 9-11Q6 10 2 7z" fill="#7f93b5"/></symbol>
<symbol id="rren" viewBox="0 0 32 32"><path d="M1.500 10.500h20v11h-20zM27 10.500h3v11h-3" fill="#e8f0fa" stroke="#8fa5c4" stroke-width="1.500"/><path d="M4 13h13v6H4z" fill="#8fa5c4"/><path d="M19 2q4 0 5 2 1-2 5-2M24 3v26M19 30q4 0 5-2 1 2 5 2" fill="none" stroke="#8fa5c4" stroke-width="2"/></symbol>
<symbol id="rprop" viewBox="0 0 32 32"><path d="M6.500 1.500h16l4 4v24h-20z" fill="#fff" stroke="#8a8a8a"/><path d="M9 17l6 7L25 9" fill="none" stroke="#f0530f" stroke-width="3"/></symbol>
<symbol id="cut" viewBox="0 0 16 16"><path d="M5 0l4 10M11 0L7 10" stroke="#8fa5c4" stroke-width="1.500"/><circle cx="4.500" cy="13" r="2.400" fill="none" stroke="#8fa5c4" stroke-width="1.400"/><circle cx="11.500" cy="13" r="2.400" fill="none" stroke="#8fa5c4" stroke-width="1.400"/></symbol>
<symbol id="cpath" viewBox="0 0 16 16"><path d="M.5 3.500h15v9H.5z" fill="#d5e2f2" stroke="#8fa5c4"/><path d="M2 6l2 4 1-4 2 4M9 10h1M11.500 10h1" stroke="#5b7396" fill="none"/></symbol>
<symbol id="pshort" viewBox="0 0 16 16"><path d="M2.500 1.500h11v14h-11z" fill="#eef4fb" stroke="#8fa5c4" stroke-width="1.600"/><path d="M5.500 13q0-5 4-5.500M7 6h3.500v4" fill="none" stroke="#5b7fb5" stroke-width="1.600"/></symbol>
<symbol id="nitem" viewBox="0 0 16 16"><path d="M.5.500h9v8h-9z" fill="#cfe8fa" stroke="#2c84b8"/><path d="M4.500 3.500h7v8h-7zM8.500 6.500h7v9h-7z" fill="#fff" stroke="#8a8a8a"/><path d="M10 9h4M10 11h4M10 13h4" stroke="#c77"/></symbol>
<symbol id="easy" viewBox="0 0 16 16"><path d="M4.500.5h8l3 3v12h-11z" fill="#fff" stroke="#8a8a8a"/><path d="M0 4h9M1 7h6M0 10h5" stroke="#2b7cd3" stroke-width="1.300"/></symbol>
<symbol id="ropen" viewBox="0 0 16 16"><path d="M2.500.5h10v14h-10z" fill="#dfe8f4" stroke="#a9bcd6"/><path d="M4 4h3M4 7h3M4 10h3" stroke="#8fa5c4" stroke-width="1.500"/><path d="M12 16V9M9.500 11L12 8l2.500 3" fill="none" stroke="#8fa5c4" stroke-width="1.600"/></symbol>
<symbol id="redit" viewBox="0 0 16 16"><path d="M2.500.5h8l3 3v12h-11z" fill="#eef4fb" stroke="#a9bcd6"/><path d="M5 12l8-9" stroke="#8fa5c4" stroke-width="2"/></symbol>
<symbol id="rhist" viewBox="0 0 16 16"><path d="M0 0h11v12H0z" fill="#ffe066"/><circle cx="10.500" cy="11" r="4.700" fill="#dde" stroke="#777"/><path d="M10.500 8v3h2.500" stroke="#333" fill="none"/><path d="M3 9q0-5 4-6v3q-2 1-1 5" fill="#2a9d2a"/></symbol>
<symbol id="sall" viewBox="0 0 16 16"><path d="M1 .7h6v6.600H1zM9 .7h6v6.600H9zM1 8.700h6v6.600H1zM9 8.700h6v6.600H9z" fill="#a5dcfb" stroke="#1f8ad1" stroke-width="1.400"/></symbol>
<symbol id="snone" viewBox="0 0 16 16"><path d="M2 1.500h5v5H2zM9.500 1.500h5v5h-5zM2 9.500h5v5H2zM9.500 9.500h5v5h-5z" fill="#fff" stroke="#aaa"/></symbol>
<symbol id="sinv" viewBox="0 0 16 16"><path d="M2 1.500h5v5H2zM9.500 9.500h5v5h-5z" fill="#fff" stroke="#aaa"/><path d="M8.500.7H15v7H8.500zM1 8.700h6.500v7H1z" fill="#a5dcfb" stroke="#1f8ad1" stroke-width="1.400"/></symbol>
<symbol id="qmark" viewBox="0 0 16 16"><circle cx="8" cy="8" r="8" fill="#0f66ba"/><path d="M5.800 6.300a2.200 2.200 0 1 1 3.500 1.800Q8 9 8 10.200M8 11.500v1.600" fill="none" stroke="#fff" stroke-width="1.700"/></symbol>
<symbol id="details" viewBox="0 0 16 16"><path d="M1 1h4v14H1zM1 5.500h4M1 10.500h4" fill="#fff" stroke="#999"/><path d="M7 3h8M7 8h8M7 13h8" stroke="#345" stroke-dasharray="3.500 1"/></symbol>
</svg>

<div class="desktop">
  <section class="screen wallpaper">
    <svg class="brand" viewBox="0 0 600 60" width="600" height="60">
      <g fill="#ff4b0a"><rect x="0" y="1" width="22" height="54" rx="4"/><rect x="24" y="28" width="21.500" height="27" rx="4"/><rect x="47.500" y="1" width="21.500" height="54" rx="4"/></g>
      <g fill="none" stroke="#0a87d6"><rect x="74.500" y="4.500" width="23.500" height="19.500" rx="1" stroke-width="8"/><rect x="74.500" y="32.500" width="23.500" height="19" rx="1" stroke-width="8"/></g>
      <g class="brand-text">
        <text class="o" x="109" y="54" font-size="73" textLength="81" lengthAdjust="spacingAndGlyphs">W</text>
        <text class="o" x="193" y="54" font-size="58" textLength="217" lengthAdjust="spacingAndGlyphs">ONDER</text>
        <text class="b" x="414" y="54" font-size="73" textLength="46" lengthAdjust="spacingAndGlyphs">B</text>
        <text class="b" x="462" y="54" font-size="58" textLength="120" lengthAdjust="spacingAndGlyphs">OTZ</text>
      </g>
    </svg>
  </section>

  <section class="screen chrome">
    <div class="tabstrip">
      <span class="tabsearch"><svg class="i s10"><use href="#down"/></svg></span>
      <div class="tab"><svg class="i"><use href="#udemy"/></svg><span class="tt">Git and GitHub for Beginners: Le</span><svg class="i s12"><use href="#x"/></svg></div>
      <div class="tab"><svg class="i"><use href="#yt"/></svg><span class="tt">uipath git version control - You</span><svg class="i s12"><use href="#x"/></svg></div>
      <div class="tab"><svg class="i"><use href="#yt"/></svg><span class="tt">Git and Version Control in UiPat</span><svg class="i s12"><use href="#x"/></svg></div>
      <div class="tab last"><svg class="i"><use href="#yt"/></svg><span class="tt">Complete Git and GitHub Tutori</span><svg class="i s12"><use href="#x"/></svg></div>
      <div class="tab active"><span class="uifav">Ui</span><span class="tt">Transactions - UiPath Orchestrat</span><svg class="i s12"><use href="#x"/></svg></div>
      <svg class="i s14 newtab"><use href="#plus"/></svg>
      <div class="wctl"><svg class="i s12"><use href="#min"/></svg><svg class="i s12"><use href="#restore"/></svg><svg class="i s12"><use href="#xthin"/></svg></div>
    </div>
    <div class="ctop">
      <div class="toolbar">
        <svg class="i"><use href="#back"/></svg><svg class="i pale"><use href="#fwd"/></svg><svg class="i"><use href="#reload"/></svg>
        <div class="url"><span class="site"><svg class="i s14"><use href="#tune"/></svg></span><span class="addr"><b>cloud.uipath.com</b>/wbz/WBZ/orchestrator_/queues/130485/transactions?tid=2521&amp;fid=1326354&amp;index=0&amp;size=20&amp;state=M4ewTgLgPgZgIgUwDYBMpzSuYEGMJwgB2UKCwuAetQCQAMUNAjFAExQDMUALALq9A%3D%3D%3D</span><svg class="i"><use href="#star"/></svg></div>
        <svg class="i blue"><use href="#win4"/></svg><svg class="i"><use href="#tri"/></svg><svg class="i s18"><use href="#puzzle"/></svg><i class="vsep"></i><svg class="i"><use href="#music"/></svg><span class="me">S</span><svg class="i s14"><use href="#dots"/></svg>
      </div>
      <div class="bookmarks" id="bookmarks"></div>
    </div>
    <div class="orange"></div>
    <div class="uihead">
      <svg class="i s17"><use href="#waffle"/></svg>
      <span class="uilogo"><b>Ui</b>Path<sup>®</sup></span>
      <span class="orch">Orchestrator</span>
      <i class="vsep"></i>
      <svg class="wbico" viewBox="0 0 34 18"><path d="M4 0h5v12H4zM10 6h5v6h-5zM16 0h5v12h-5z" fill="#ff4b0a"/><path d="M23 1.200h5v3.800h-5zM23 7h5v3.800h-5z" fill="none" stroke="#0a87d6" stroke-width="2.200"/><text x="0" y="17.500" font-size="5" font-weight="700" textLength="34" lengthAdjust="spacingAndGlyphs" fill="#ff4b0a">Wonder<tspan fill="#0a87d6">Botz</tspan></text></svg>
      <i class="vsep"></i>
      <svg class="i s20"><use href="#search"/></svg><svg class="i s20"><use href="#addbox"/></svg><svg class="i s22"><use href="#bell"/></svg><svg class="i s20"><use href="#doc"/></svg><i class="vsep"></i><svg class="i s21"><use href="#help"/></svg><svg class="i s28"><use href="#av"/></svg>
    </div>
    <div class="uibody">
      <aside class="uiside">
        <div class="srow tenant"><svg class="i s14"><use href="#globe"/></svg>Tenant</div>
        <div class="srow mf"><svg class="i"><use href="#folder"/></svg>My Folders</div>
        <div class="sbox"><svg class="i"><use href="#search"/></svg>Search</div>
        <div class="srow ws"><svg class="i"><use href="#folderstar"/></svg>My Workspace</div>
        <div class="srow sel"><svg class="i"><use href="#folder"/></svg>WBZ_Main</div>
      </aside>
      <main class="uimain">
        <div class="crumbs"><span>WBZ_Main</span><svg class="i s12"><use href="#right"/></svg><span>Queues</span><svg class="i s12"><use href="#right"/></svg><b>Transactions: #WBZ_InvoiceBotz_WorkQueue</b><svg class="i s14"><use href="#xthin"/></svg></div>
        <div class="tools">
          <div class="sbox"><svg class="i"><use href="#search"/></svg>Search</div>
          <svg class="i s17"><use href="#cols"/></svg><svg class="i s12"><use href="#down"/></svg><i class="vsep"></i><svg class="i"><use href="#filter"/></svg><svg class="i s12"><use href="#down"/></svg>
          <span class="export"><svg class="i s14"><use href="#dl"/></svg>Export</span>
        </div>
        <div class="selected">0 rows selected</div>
        <div class="table">
          <div class="tr th"><i class="cb"></i><span>Reference</span><span class="st">Status</span><span>Revision</span><span>Priority</span><span>Deadline</span><span>Postpone</span><span>Started <svg class="i s14"><use href="#sort"/></svg></span><span>Ended <svg class="i s14"><use href="#sort"/></svg></span><span>Robot</span><svg class="i s14"><use href="#reload"/></svg></div>
          <div id="rows"></div>
          <i class="edgeshade"></i>
        </div>
        <div class="hscroll"><i></i></div>
        <div class="tfoot"><span>1 - 20 / 260</span><svg class="i s10 off"><use href="#first"/></svg><svg class="i s10 off"><use href="#left"/></svg><span>Page 1 / 13</span><svg class="i s10"><use href="#right"/></svg><svg class="i s10"><use href="#last"/></svg><span>Items</span><small>20</small><svg class="i s14"><use href="#down"/></svg></div>
      </main>
    </div>
    <div class="taskbar" id="taskbar"></div>
  </section>

  <section class="screen edge">
    <div class="etabs">
      <svg class="i s24"><use href="#photo"/></svg><svg class="i s18"><use href="#copies"/></svg><svg class="i"><use href="#vtabs"/></svg><i class="vsep"></i><svg class="i"><use href="#block"/></svg>
      <svg class="i s12 g"><use href="#min"/></svg><svg class="i s12 g"><use href="#restore"/></svg><svg class="i s12 g"><use href="#xthin"/></svg>
    </div>
    <div class="ebar">
      <svg class="i s18"><use href="#back"/></svg><svg class="i s18"><use href="#reload"/></svg>
      <div class="eaddr"><svg class="i"><use href="#lock"/></svg>htt</div>
      <svg class="i"><use href="#puzzle"/></svg><i class="vsep"></i><svg class="i s18"><use href="#split"/></svg><svg class="i s18"><use href="#favs"/></svg><svg class="i s18"><use href="#collect"/></svg><svg class="i s18"><use href="#heart"/></svg><svg class="i"><use href="#hdots"/></svg><svg class="i s26"><use href="#copilot"/></svg>
    </div>
    <div class="emarks"><svg class="i"><use href="#greyt"/></svg><span>greytHR IDP</span><svg class="i"><use href="#smart"/></svg><span>Sma</span><span>Power Apps | Flows</span><svg class="i"><use href="#right"/></svg></div>
    <div class="page">
      <div class="pagebody">
        <div class="ghhead">
          <div class="ghtop"><span class="gbtn"><svg class="i"><use href="#burger"/></svg></span><svg class="i s32"><use href="#gh"/></svg><span>sagarbb</span>
            <span class="gbtn term"><svg class="i"><use href="#term"/></svg></span><i class="vsep"></i><span class="gbtn add"><svg class="i"><use href="#plus"/></svg><svg class="i s10"><use href="#caret"/></svg></span><span class="gbtn"><svg class="i"><use href="#issue"/></svg></span><span class="gbtn"><svg class="i"><use href="#pr"/></svg></span><span class="gbtn"><svg class="i"><use href="#inbox"/></svg></span><svg class="i s32"><use href="#ident"/></svg></div>
          <div class="ghtabs"><span class="on"><svg class="i"><use href="#code"/></svg>Code</span><span><svg class="i"><use href="#issue"/></svg>Issue</span></div>
        </div>
        <div class="ghfile">
          <div class="brow"><svg class="i"><use href="#side"/></svg><span class="gbtn br"><svg class="i"><use href="#branch"/></svg>main</span><span class="gbtn goto"><svg class="i"><use href="#search"/></svg><span>Go to file</span><kbd>t</kbd></span><span class="gbtn"><svg class="i"><use href="#hdots"/></svg></span></div>
          <div class="commit"><svg class="i s20"><use href="#ident"/></svg><span class="who">sagarbbend</span><small>5ec4218 · 24 minutes ago</small><svg class="i"><use href="#hist"/></svg><span>History</span></div>
          <div class="blob">
            <div class="blobhead"><span class="seg"><b>Preview</b><span>Code</span></span>
              <span class="grp"><span>Raw</span><svg class="i"><use href="#copy"/></svg><svg class="i"><use href="#dlbox"/></svg></span><span class="grp two"><svg class="i"><use href="#pencil"/></svg><svg class="i s10"><use href="#caret"/></svg></span></div>
          </div>
        </div>
      </div>
      <div class="vscroll"><svg class="i s10"><use href="#caretup"/></svg><i></i><svg class="i s12"><use href="#caret"/></svg></div>
    </div>
    <div class="win rear" id="rear"></div>
    <div class="win front" id="front"></div>
  </section>
</div>
<script src="app.js"></script>
</body>
</html>
```

FILE: styles.css
```css
*{box-sizing:border-box}
html,body{margin:0;background:#000;overflow:hidden}
.sprite{position:absolute;width:0;height:0}
.desktop{zoom:.711111;width:5760px;height:1080px;display:grid;grid-template-columns:1920px 1920px 1920px;font-family:"Open Sans","Noto Sans",sans-serif;font-size:12px;line-height:1.5;white-space:nowrap;overflow:hidden}
.screen{height:1080px;overflow:hidden;min-width:0}
.i{width:16px;height:16px;display:block;flex:none;overflow:visible}
.s10{width:10px;height:10px}.s12{width:12px;height:12px}.s14{width:14px;height:14px}.s17{width:17px;height:17px}.s18{width:18px;height:18px}.s20{width:20px;height:20px}.s21{width:21px;height:21px}.s22{width:22px;height:22px}.s24{width:24px;height:24px}.s26{width:26px;height:26px}.s28{width:28px;height:28px}.s32{width:32px;height:32px}
.vsep{display:block;width:1px;height:24px;background:#cfd8dd}

/* wallpaper */
.wallpaper{background:#000;padding:511px 0 0 646px}
.brand{display:block;overflow:visible}
.brand-text{font-family:Lato,"Open Sans",sans-serif;font-weight:900;stroke-width:3}
.brand-text .o{fill:#ff4b0a;stroke:#ff4b0a}
.brand-text .b{fill:#0a87d6;stroke:#0a87d6}

/* chrome window */
.chrome{background:#fff;display:flex;flex-direction:column;font-family:"Open Sans",sans-serif}
.tabstrip{height:40px;background:#d3e3fd;display:flex;align-items:center;padding-left:6px;color:#1f1f1f;letter-spacing:-.3px;flex:none}
.tabsearch{width:28px;height:28px;border-radius:10px;background:#e9f1fe;display:grid;place-items:center;margin-right:3px}
.tab{width:238px;height:40px;display:flex;align-items:center;padding:2px 0 0 11px;position:relative;color:#3c4047}
.tab::after{content:"";position:absolute;right:-1px;top:12px;width:2px;height:16px;background:#a8c7fa}
.tab.last::after,.tab.active::after{display:none}
.tt{width:168px;margin:0 11px 0 8px;-webkit-mask:linear-gradient(90deg,#000 140px,transparent 168px);mask:linear-gradient(90deg,#000 140px,transparent 168px)}
.tab.active{color:#1f1f1f}
.tab.active::before{content:"";position:absolute;z-index:0;left:3px;top:6px;width:232px;height:34px;background:#fff;border-radius:10px 10px 0 0}
.tab.active>*{position:relative}
.uifav{width:16px;height:16px;border:2px solid #fa4616;color:#fa4616;font-weight:700;font-size:11px;line-height:12px;text-align:center;background:#fff}
.newtab{margin:0 0 0 10px;color:#333}
.wctl{margin-left:auto;display:flex;gap:34px;padding-right:17px;color:#111}
.ctop{height:81px;background:#fff;border-radius:8px 8px 0 0;box-shadow:0 -6px 0 #d3e3fd;border-bottom:1px solid #ddd;flex:none}
.tabstrip{position:relative;z-index:1}
.toolbar{height:46px;padding-left:14px;display:grid;grid-template-columns:36px 36px 35px 1571px 36px 36px 35px 19px 34px 46px 20px;align-items:center;color:#45484d}
.pale{color:#b0b2b6}.blue{color:#1f6fc0}
.url{width:1553px;height:34px;border-radius:17px;background:#eceef8;display:flex;align-items:center;padding:0 16px 0 4px}
.site{width:24px;height:24px;border-radius:50%;background:#fff;display:grid;place-items:center;margin-right:8px;color:#333}
.addr{flex:1;font-size:14px;color:#474a50;letter-spacing:-.24px}
.addr b{font-weight:400;color:#1f1f1f}
.toolbar .vsep{background:#c7dafb;width:2px;height:16px}
.bookmarks .vsep{background:#c7dafb;width:2px;height:16px}
.me{width:20px;height:20px;border-radius:50%;background:#ec6a00;color:#fff;display:grid;place-items:center;font-size:11px}
.bookmarks{height:28px;display:flex;align-items:center;padding-left:12px;color:#45484d;letter-spacing:-.3px}
.bm{display:flex;align-items:center;gap:6px}
.orange{height:3px;background:#ff4615;flex:none}
.uihead{height:45px;flex:none;padding-left:25px;border-bottom:1px solid #cfd8dd;display:grid;grid-template-columns:41px 70px 119px 17px 50px 1319px 40px 40px 40px 43px 18px 44px 30px;align-items:center;color:#526069}
.uilogo{display:flex;align-items:center;font-size:19px;font-weight:600;color:#fa4616;letter-spacing:-.8px}
.uilogo b{border:2px solid #fa4616;width:23px;height:22px;line-height:18px;text-align:center;margin-right:2px;font-weight:600;letter-spacing:-.5px}
.uilogo sup{font-size:5px;align-self:flex-start}
.orch{font-size:18px;font-weight:600;color:#182027;letter-spacing:-.95px}
.wbico{width:34px;height:18px;display:block;overflow:visible}
.uibody{height:881px;display:grid;grid-template-columns:220px 1700px;font-family:"Noto Sans","Open Sans",sans-serif;font-size:14px;color:#526069;flex:none}
.uiside{border-right:1px solid #cfd8dd}
.srow{display:flex;align-items:center;height:32px;padding-left:25px;gap:6px;color:#273139}
.srow .i{color:#526069}
.tenant{height:41px;margin:0 10px;padding-left:15px;border-bottom:1px solid #cfd8dd;gap:8px;font-weight:500}
.mf{height:48px;gap:9px;font-weight:500}
.sbox{display:flex;align-items:center;border:1px solid #526069;border-radius:3px;height:32px;color:#6b7882;background:#fff}
.uiside .sbox{margin:0 24px 15px;padding-left:6px;gap:6px}
.ws{color:#526069}
.srow.sel{background:#e9f1fa;border-left:4px solid #0067df;padding-left:21px}
.uimain{padding:0 20px}
.crumbs{height:41px;border-bottom:1px solid #cfd8dd;display:grid;grid-template-columns:94px 33px 74px 34px 1404px 20px;align-items:center}
.crumbs b{font-weight:500;color:#273139}
.crumbs .i{color:#526069}
.tools{height:36px;display:grid;grid-template-columns:257px 28px 27px 20px 28px 1203px 97px;align-items:center;color:#273139}
.tools .sbox{width:240px;padding-left:8px;gap:12px;align-self:start}
.export{background:#0067df;color:#fff;height:32px;border-radius:3px;font-weight:600;display:flex;align-items:center;gap:9px;padding-left:13px;align-self:end}
.selected{height:46px;display:flex;align-items:center;padding-left:10px;font-size:16px;letter-spacing:-.1px}
.table{position:relative}
.tr{height:32px;display:grid;grid-template-columns:55px 277px 169px 164px 164px 164px 163px 164px 164px 143px 33px;align-items:center;border-bottom:1px solid #cfd8dd}
.tr>span:nth-child(n+7){color:#3d4a54}
#rows .tr:first-child{height:33px}
#rows .tr:last-child{border-bottom:0;height:31px}
.th{height:40px;background:#f4f5f7;font-weight:500;color:#3a4750}
.th>span{display:flex;align-items:center;gap:5px}
.th .i{color:#526069}
.tr .st{border-left:1px solid #cfd8dd;height:100%;display:flex;align-items:center;padding-left:4px}
.tr.hover{background:#f0f1f3}
.cb{width:16px;height:16px;border:2px solid #5b6871;border-radius:2px;margin-left:17px}
.rb{display:flex;align-items:center}
.rb em{font-style:normal;width:118px;-webkit-mask:linear-gradient(90deg,#000 92px,transparent 116px);mask:linear-gradient(90deg,#000 92px,transparent 116px);margin-right:3px}
.rb .i{color:#222}
.kebab{width:28px;height:28px;border-radius:50%;background:#dcdde1;display:grid;place-items:center;color:#111}
.edgeshade{position:absolute;right:0;top:40px;width:20px;bottom:0;background:linear-gradient(90deg,rgba(0,0,0,0),rgba(0,0,0,.13))}
.hscroll{height:8px;margin-top:1px;background:#f3f3f3;border-radius:4px}
.hscroll i{display:block;width:1364px;height:8px;border-radius:4px;background:#c1c1c1}
.tfoot{height:32px;padding-left:16px;display:grid;grid-template-columns:680px 28px 56px 126px 28px 596px 58px 28px 20px;align-items:center}
.tfoot small{font-size:12px}
.tfoot .i{color:#333}.tfoot .off{color:#a8b0b6}
.taskbar{height:30px;background:#1a1a1a;display:flex;color:#fff;letter-spacing:-.4px;margin-top:auto;font-size:12px;flex:none}
.tk{height:30px;display:flex;align-items:center;gap:4px;flex:none}
.tk.ico{justify-content:center}
.tk.run{border-bottom:2px solid #76b9ed;padding:2px 0 0 3px}
.tk.act{background:#484848;padding-left:7px}
.tk.hot{background:#a65b25;border-color:#ff7a1a;padding-left:7px}
.tsearch{background:#f2f2f2;color:#333;gap:10px;padding-left:10px;font-size:14px;border-top:1px solid #aaa}

/* edge window */
.edge{background:#f7f7f7;position:relative;display:flex;flex-direction:column}
.etabs{height:32px;background:#e8e8e8;display:grid;grid-template-columns:43px 42px 35px 11px 1657px 45px 47px 20px;align-items:center;padding-left:10px;flex:none;color:#333}
.g{color:#777}
.etabs .vsep{background:#999;height:20px}
.ebar{height:38px;display:grid;grid-template-columns:45px 28px 1523px 32px 16px 44px 44px 44px 45px 37px 26px;padding-left:18px;align-items:center;color:#222;flex:none}
.eaddr{height:30px;border-radius:15px;background:#fff;display:flex;align-items:center;gap:15px;padding-left:18px;font-size:14px;color:#666;width:1500px}
.emarks{height:33px;display:grid;grid-template-columns:24px 81px 24px 1476px 267px 16px;align-items:center;padding-left:14px;color:#222;letter-spacing:-.2px;flex:none}
.page{margin:1px 4px 4px 4px;flex:1;border:1px solid #ddd;border-radius:8px;background:#fff;display:grid;grid-template-columns:1896px 14px;overflow:hidden;font-size:14px;color:#1f2328}
.page .vscroll{display:flex;flex-direction:column;align-items:center;background:#fbfbfb;color:#888;padding:8px 0 6px}
.vscroll i{width:9px;height:889px;border-radius:5px;background:#8f8f8f;margin:5px 0 auto}
.ghhead{height:103px;background:#f6f8fa;border-bottom:1px solid #d1d9e0}
.ghtop{display:grid;grid-template-columns:48px 48px 1484px 55px 12px 66px 40px 40px 40px 32px;padding:15px 0 0 15px;align-items:center;color:#1f2328;letter-spacing:-.2px}
.gbtn{height:32px;min-width:32px;border:1px solid #d1d9e0;border-radius:6px;background:#f6f8fa;display:flex;align-items:center;justify-content:center;justify-self:start;color:#59636e;gap:10px}
.gbtn.term{width:41px;justify-content:flex-end;padding-right:7px}
.gbtn.add{width:58px}
.ghtop .i{color:#59636e}
.ghtabs{display:flex;padding:8px 0 0 15px;height:56px}
.ghtabs span{width:72px;height:48px;display:flex;gap:8px;align-items:center;padding-left:8px;margin-right:9px;letter-spacing:-.2px}
.ghtabs .on{border-bottom:2px solid #fd8c73;font-weight:500}
.ghtabs .i{color:#59636e}
.ghfile{padding:16px 16px 0 15px;display:flex;flex-direction:column;gap:16px}
.brow{display:grid;grid-template-columns:40px 1528px 265px 32px;align-items:center}
.brow>.i{margin-left:8px;color:#59636e}
.gbtn.br{width:110px;justify-content:flex-start;padding-left:12px;gap:9px;color:#1f2328}
.gbtn.goto{background:#fff;width:253px;justify-content:flex-start;padding:0 7px 0 36px}
.goto span{flex:1}
.goto kbd{font:12px "Open Sans",sans-serif;border:1px solid #eaedf0;border-radius:6px;padding:1px 6px;background:#f6f8fa;color:#222}
.commit{height:46px;border:1px solid #d1d9e0;border-radius:6px;display:grid;grid-template-columns:28px 1581px 151px 21px 60px;align-items:center;padding-left:17px}
.commit small{font-size:12px;color:#59636e}
.commit .who{font-weight:500}
.commit span,.commit small{letter-spacing:-.3px}
.commit>.i:nth-of-type(2){color:#59636e}
.blob{height:226px;border:1px solid #d1d9e0;border-radius:6px;overflow:hidden}
.blobhead{height:46px;background:#f6f8fa;border-bottom:1px solid #d1d9e0;display:flex;align-items:center;padding:0 6px 0 8px}
.seg{height:30px;background:#e8ebee;border-radius:6px;display:flex;align-items:center;width:150px;margin-right:auto;letter-spacing:-.2px}
.seg b{font-weight:500;height:30px;width:75px;border:1px solid #8c959f;border-radius:6px;background:#fff;display:grid;place-items:center;margin-right:15px}
.grp{display:grid;grid-template-columns:39px 28px 27px;height:29px;border:1px solid #d1d9e0;border-radius:6px;font-size:12px;align-items:center;justify-items:center}
.grp>span{color:#1f2328}.grp .i{color:#59636e}
.grp.two{grid-template-columns:27px 27px;margin-left:7px}

/* explorer windows */
.win{position:absolute;background:#fff;border:1px solid #8d8d8d;width:1450px;height:821px;box-shadow:0 5px 10px rgba(0,0,0,.35);display:flex;flex-direction:column;font-size:12px;letter-spacing:-.3px;color:#000}
.front{left:163px;top:0}
.rear{left:137px;top:234px}
.wtitle{height:31px;display:grid;grid-template-columns:23px 17px 22px 19px 11px 8px 1226px 45px 46px 20px;align-items:center;padding-left:8px;color:#888;flex:none}
.wtitle .vsep{height:12px;background:#999}
.wtitle .s10{color:#222}
.wtabs{height:22px;display:flex;flex:none;color:#333;border-bottom:1px solid #dadbdc}
.wtabs>span{display:grid;place-items:center;height:23px}
.wtabs .file{background:#0063b1;color:#fff;width:56px}
.wtabs .home{background:#f5f6f7;width:58px;border:1px solid #dadbdc;border-bottom:0}
.wtabs .share{width:58px}.wtabs .view{width:56px}
.wtabs .uh{display:flex;gap:8px;align-items:center;margin-left:auto;padding-right:2px;color:#888}
.ribbon{height:92px;background:#f5f6f7;border-bottom:1px solid #dadbdc;display:flex;flex:none;color:#222}
.rg{border-right:1px solid #e1e2e3;display:grid;grid-template-rows:74px 18px}
.rgc{display:flex;padding-left:4px}
.rgl{text-align:center;color:#555;line-height:17px}
.rb1{display:flex;flex-direction:column;align-items:center;text-align:center;padding-top:7px;line-height:13px}
.rb1 .i{width:32px;height:32px;margin-bottom:4px}
.rb1 .pinb{width:22px;height:22px;margin:6px 0 9px}
.rb1 .i.cr,.cr{width:7px!important;height:7px!important;margin:0!important;display:inline-block!important}
.dim{color:#8a8d91}
.rsm{display:grid;grid-template-rows:22px 22px 22px;padding-top:4px;align-items:center}
.rsm span{display:flex;align-items:center;gap:3px}
.rsm .cr{margin-left:2px!important}
.nav{height:36px;display:flex;align-items:center;flex:none;color:#666;padding-left:11px}
.path{margin-left:5px;width:719px;height:22px;border:1px solid #d9d9d9;display:flex;align-items:center;color:#111;padding-left:3px}
.path span{flex:none}
.path .tail{margin-left:auto;display:flex;gap:9px;padding-right:4px;color:#666}
.qsearch{margin-left:12px;width:600px;height:22px;border:1px solid #d9d9d9;display:flex;align-items:center;justify-content:space-between;padding:0 6px 0 8px;color:#777}
.wbody{flex:1;display:grid;grid-template-columns:276px 1fr;min-height:0}
.tree{border-right:1px solid #f0f0f0;padding-top:15px}
.rear .tree{padding-top:303px}
.tn{height:24px;display:flex;align-items:center;gap:5px;padding-left:33px;width:273px}
.tn.c{padding-left:40px}
.tn.gap{margin-top:8px}
.tn.on{background:#d9d9d9}
.tn .pin{width:12px;height:12px;margin-left:auto;margin-right:2px}
.fhead{height:30px;display:grid;grid-template-columns:261px 144px 120px 79px;margin-left:11px;color:#4c607a;align-items:center}
.fhead span{height:25px;display:flex;align-items:center;border-right:1px solid #e5e5e5;padding-left:7px}
.fr{height:21px;display:grid;grid-template-columns:24px 240px 144px 120px 66px;align-items:center;margin-left:15px;width:599px;padding-left:4px;color:#6d6d6d}
.fr span{letter-spacing:-.4px}
.fr b{font-weight:400;color:#000}
.fr u{text-decoration:none;text-align:right}
.fr.sel{background:#e5f3ff}
.wstat{height:23px;display:flex;align-items:center;padding-left:14px;color:#1e3c66;flex:none}
.wstat i{width:1px;height:14px;background:#e8e8e8;margin:0 11px 0 20px}
.wstat .vb{margin-left:auto;border:1px solid #26a0da;background:#cbe8f6;width:22px;height:22px;display:grid;place-items:center}
.wstat .vp{margin:0 7px 0 4px;width:14px;height:14px}
```

FILE: app.js
```js
const ic = (n, c = "") => `<svg class="i ${c}"><use href="#${n}"/></svg>`;
const put = (id, html) => { document.getElementById(id).innerHTML = html; };

// Bookmark bar: icon, label, slot width
put("bookmarks", [
  ["yt", "YouTube", 84], ["ccorner", "C# Corner Technolo...", 152], ["amazon", "Online Shopping sit...", 152],
  ["google", "C# code for vlooku...", 148], ["yt", "How to read data fr...", 151], ["quill", "Paraphrasing Tool -...", 149],
  ["so", "c# - Referencing Off...", 154], ["medium", "Custom Code Actio...", 150], ["visio", "View visio online fre...", 153],
  ["udemy", "Online Courses - Le...", 150], ["globe", "GES's The Lexicon S...", 151], ["gpt", "Chat-GPT", 154]
].map(([i, t, w]) => `<span class="bm" style="width:${w}px">${ic(i)}${t}</span>`).join("") +
  `<span class="bm" style="width:28px">${ic("dright", "s12")}</span><span class="bm" style="width:18px"><i class="vsep"></i></span><span class="bm">${ic("folder")}All Bookmarks</span>`);

// Queue transactions: reference suffix, status, postpone date, started, ended, robot
const A = "17/05/2024, 00:00:...", B = "21/05/2024, 06:49:...", D = "demo@wonderbot...";
const S = "Successful", X = "Abandoned", F = "Failed";
put("rows", [
  [8, "New", A, "", "", ""],
  [8, F, A, "7 minutes ago", "6 minutes ago", "sagar.bendre@wo"],
  [8, S, A, "41 minutes ago", "36 minutes ago", "training-1@wonder..."],
  [9, "In Progress", B, "47 minutes ago", "", "training-1@wonder..."],
  [8, S, A, "1 hour ago", "1 hour ago", D],
  [9, S, B, "1 hour ago", "1 hour ago", D],
  [8, S, A, "1 hour ago", "1 hour ago", D],
  [9, S, B, "1 hour ago", "1 hour ago", D],
  [9, S, B, "1 hour ago", "1 hour ago", D],
  [9, X, B, "1 hour ago", "20 minutes ago", D],
  [9, S, B, "2 hours ago", "2 hours ago", D],
  [8, X, A, "3 hours ago", "1 hour ago", D],
  [9, F, B, "3 hours ago", "3 hours ago", D],
  [8, F, A, "3 hours ago", "3 hours ago", D],
  [8, F, A, "3 hours ago", "3 hours ago", D],
  [9, X, B, "3 hours ago", "2 hours ago", D],
  [9, X, B, "4 hours ago", "2 hours ago", D],
  [9, X, B, "4 hours ago", "3 hours ago", D],
  [9, F, B, "1 day ago", "1 day ago", "vishakha.kolhe@w..."],
  [8, X, A, "1 day ago", "23 hours ago", D]
].map(([n, st, p, s, e, r], k) => {
  const hover = k === 1;
  const robot = hover ? `<span class="rb"><em>${r}</em>${ic("info", "s14")}</span><span class="kebab">${ic("dots", "s14")}</span>` : `<span>${r}</span>`;
  return `<div class="tr${hover ? " hover" : ""}"><i class="cb"></i><span>05102414283${n}LOC</span><span class="st">${st}</span><span>None</span><span>Normal</span><span></span><span>${p}</span><span>${s}</span><span>${e}</span>${robot}</div>`;
}).join(""));

// Taskbar entries: kind, icon, label, width, left margin
put("taskbar", [
  ["ico", "winlogo", "", 36, 0], ["tsearch", "wsearch", "Search", 258, 0], ["ico", "note", "", 34, 2], ["ico", "excel", "", 34, 0],
  ["run", "arrowdl", "Downloads", 102, 5], ["run", "fold", "14 May 2024", 102, 8], ["run", "fold", "IB_Performe...", 102, 8],
  ["ico", "onenote", "", 34, 4], ["ico", "snip", "", 34, 1], ["run act", "chrome", "Transactions...", 110, 0],
  ["run", "outlook", "Inbox - saga...", 102, 5], ["run", "edge", "Test/READM...", 102, 9], ["ico", "teams", "", 34, 4],
  ["run hot", "teamsnew", "Chat | Visha...", 110, 1], ["run", "ghdesk", "GitHub Desk...", 102, 5],
  ["run", "studio", "WBZSolutio...", 102, 9], ["run", "assist", "WBZSolutio...", 102, 9],
  ["", "", "Desktop", 52, 17], ["", "dright", "", 18, -1], ["", "up", "", 21, 2], ["", "cloud", "", 24, 3], ["", "batt", "", 26, 0],
  ["", "wifi", "", 22, -1], ["", "spk", "", 24, -1], ["", "", "ENG", 36, 2], ["", "", "04:56 PM", 67, 0], ["", "notif", "", 36, 0]
].map(([k, i, t, w, m]) => `<div class="tk ${k}" style="width:${w}px;margin-left:${m}px">${i ? ic(i) : ""}${t ? `<span>${t}</span>` : ""}</div>`).join(""));

// File Explorer windows
const drives = [
  ["desk", "Desktop", "c"], ["docs", "Documents", "c"], ["arrowdl", "Downloads", "c"], ["note8", "Music", "c"],
  ["pics", "Pictures", "c"], ["vids", "Videos", "c"], ["disk", "Local Disk (C:)", "c on"], ["net", "Network", "gap"]
];
const tree = [
  ["qa", "Quick access"], ["desk", "Desktop", "c", 1], ["arrowdl", "Downloads", "c", 1], ["docs", "Documents", "c", 1], ["pics", "Pictures", "c", 1],
  ["fold", "P-072_COM-SA-CFD-Compliance -San", "c", 1], ["fold", "Nelco", "c", 1], ["fold", "Trainings", "c", 1],
  ["fold", "InvoiceBotzPerformer_05132024", "c"], ["fold", "P-309-OP-OG New Invoice Notification", "c"], ["fold", "Scripts", "c"], ["fold", "WonderBotz", "c"],
  ["onedrive", "OneDrive - WonderBotz LLC", "gap"], ["pc", "This PC", "gap"], ["cube", "3D Objects", "c"], ...drives
];
const M = "14-05-2024 02:06 PM", EC = "Microsoft Excel C...", EW = "Microsoft Excel W...", FF = "File folder";
const files = [
  ["fold", "IB_Performer_Config", "23-05-2024 04:56 PM", FF, ""], ["fold", "IB_Performer_Output_Files", "14-05-2024 02:12 PM", FF, ""],
  ["fold", "IB_Performer_Run_Reports", "23-05-2024 04:56 PM", FF, ""], ["fold", "IB_Performer_Temp_Files", "14-05-2024 02:12 PM", FF, ""],
  ["fold", "Mongo DB", "12-03-2024 12:45 PM", FF, ""],
  ["csv", "NonPOBillingString", M, EC, "1 KB"], ["xls", "NonPOBillingString", M, EW, "11 KB"],
  ["csv", "POBillingString", M, EC, "1 KB"], ["xls", "POBillingString", M, EW, "11 KB"], ["xls", "POTable", M, EW, "10 KB"],
  ["csv", "UtilityBillingString", M, EC, "1 KB"], ["xls", "UtilityBillingString", M, EW, "11 KB"],
  ["short", "WBZ_InvoiceBotz_Performer - Shortcut", M, "Shortcut", "2 KB"]
];
const cr = ic("caret", "cr");
const big = (i, t, w, c = "") => `<div class="rb1 ${c}" style="width:${w}px">${i}<span>${t}</span></div>`;
const group = (w, label, body) => `<div class="rg" style="width:${w}px"><div class="rgc">${body}</div><div class="rgl">${label}</div></div>`;
const small = (m, rows) => `<div class="rsm" style="margin-left:${m}px">${rows.map(([i, t, c = ""]) => `<span class="${c}">${ic(i)}${t}</span>`).join("")}</div>`;
const node = ([i, t, c = "", p]) => `<div class="tn ${c}">${ic(i)}<span>${t}</span>${p ? ic("pin", "pin") : ""}</div>`;
const status = t => `<div class="wstat">${t}<span class="vb">${ic("details")}</span>${ic("pics", "vp")}</div>`;
// Address bar: crumb and the distance to the next one
const crumbs = [["Local Disk (C:)", 81], ["WonderBotz", 71], ["InvoiceBotz", 67], ["WBZ_InvoiceBotz_Performer", 155], ["IB_Performer_Data", 103]];

put("front", `<div class="wtitle">${ic("fold")}<i class="vsep"></i>${ic("check")}${ic("fold")}${ic("caret", "s10")}<i class="vsep"></i><span>IB_Performer_Data</span>${ic("min", "s12")}${ic("max", "s12")}${ic("xthin", "s12")}</div>
  <div class="wtabs"><span class="file">File</span><span class="home">Home</span><span class="share">Share</span><span class="view">View</span><div class="uh">${ic("up", "s12")}${ic("qmark")}</div></div>
  <div class="ribbon">` +
    group(262, "Clipboard", big(ic("pin", "pinb"), "Pin to Quick<br>access", 70) + big(ic("rcopy"), "Copy", 40, "dim") + big(ic("rpaste"), "Paste", 42) +
      small(4, [["cut", "Cut", "dim"], ["cpath", "Copy path", "dim"], ["pshort", "Paste shortcut", "dim"]])) +
    group(191, "Organise", big(ic("rmove"), "Move<br>to " + cr, 42, "dim") + big(ic("rcopyto"), "Copy<br>to " + cr, 42, "dim") +
      `<i class="vsep" style="height:54px;margin:10px 4px 0"></i>` + big(ic("rdel"), "Delete<br>" + cr, 42) + big(ic("rren"), "Rename", 45, "dim")) +
    group(145, "New", big(ic("newfold"), "New<br>folder", 42) + small(4, [["nitem", "New item" + cr], ["easy", "Easy access" + cr]])) +
    group(133, "Open", big(ic("rprop"), "Properties<br>" + cr, 58) + small(2, [["ropen", "Open" + cr, "dim"], ["redit", "Edit", "dim"], ["rhist", "History"]])) +
    group(115, "Select", small(4, [["sall", "Select all"], ["snone", "Select none"], ["sinv", "Invert selection"]])) +
  `</div>
  <div class="nav"><span style="width:31px">${ic("back")}</span><span style="width:26px;color:#ccc">${ic("fwd")}</span><span style="width:17px">${ic("down", "s10")}</span><span style="width:16px">${ic("upa")}</span>
    <div class="path"><span style="width:22px">${ic("fold")}</span><span style="width:16px">${ic("dleft", "s14")}</span>${crumbs.map(([t, w]) => `<span style="width:${w}px">${t}</span><span style="width:15px">${ic("right", "s10")}</span>`).join("")}<span class="tail">${ic("down", "s12")}${ic("reload", "s12")}</span></div>
    <div class="qsearch">Search IB_Performer_Data${ic("wsearch")}</div></div>
  <div class="wbody"><div class="tree">${tree.map(node).join("")}</div>
    <div><div class="fhead"><span>Name</span><span>Date modified</span><span>Type</span><span>Size</span></div>${files.map(([i, n, d, t, s], k) => `<div class="fr${k === 12 ? " sel" : ""}">${ic(i)}<b>${n}</b><span>${d}</span><span>${t}</span><u>${s}</u></div>`).join("")}</div></div>` +
  status("13 items<i></i>"));

put("rear", `<div class="wtitle">${ic("fold")}</div>
  <div class="wtabs"><span class="file">File</span></div>
  <div class="ribbon">${group(262, "", big(ic("pin", "pinb"), "Pin to Quick<br>access", 70, "dim"))}</div>
  <div class="nav">${ic("back")}</div>
  <div class="wbody"><div class="tree">${node(["onedrive", "", "gap"])}${node(["pc", "", "gap"])}${node(["cube", "", "c"])}${drives.map(node).join("")}</div></div>` +
  status("7 items<i></i>1 item selected&nbsp; 18.5 KB<i></i>"));
```
